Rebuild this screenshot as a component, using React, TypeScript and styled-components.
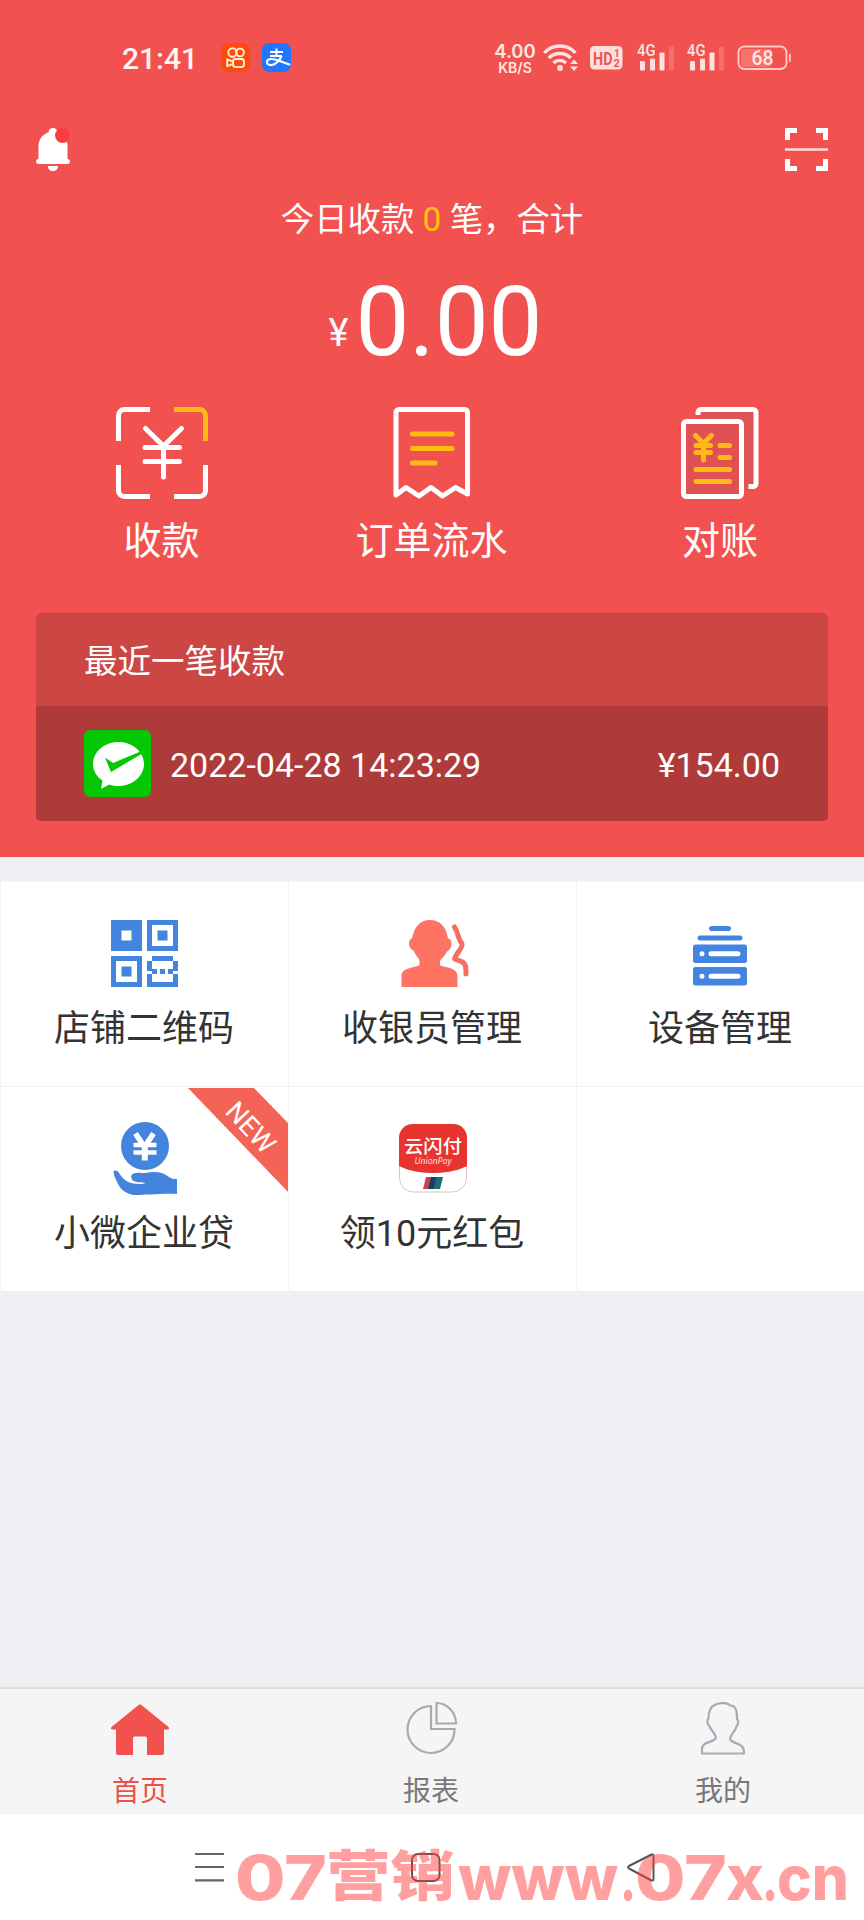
import React from "react";
import styled, { createGlobalStyle } from "styled-components";

const GlobalStyle = createGlobalStyle`
  * { box-sizing: border-box; }
  body { margin: 0; background: #efeff4; font-family: Roboto, "Noto Sans CJK SC", sans-serif; }
  svg { display: block; flex: none; overflow: visible; }
`;

const Screen = styled.div`
  width: 864px;
  height: 1920px;
  display: flex;
  flex-direction: column;
  background: #efeff4;
  overflow: hidden;
`;

/* ---------- Hero ---------- */
const Hero = styled.section`
  height: 857px;
  flex: none;
  background: #f2524f;
  color: #fff;
`;

const StatusBar = styled.div`
  height: 116px;
  display: flex;
  align-items: center;
  padding-left: 122px;
`;

const Clock = styled.span`
  font-size: 30px;
  font-weight: 500;
  width: 99px;
  color: #fff4f2;
`;

const AppBadge = styled.span<{ $color: string; $gap?: number }>`
  width: 29px;
  height: 29px;
  border-radius: 7px;
  margin: -1px ${(p) => p.$gap ?? 0}px 0 0;
  background: ${(p) => p.$color};
`;

const Speed = styled.div`
  width: 42px;
  display: flex;
  flex-direction: column;
  align-items: center;
  font-family: Inter, sans-serif;
  color: #ffe9e7;
  white-space: nowrap;
`;
const SpeedValue = styled.span`
  font-size: 18.5px;
  line-height: 18px;
  font-weight: 600;
`;
const SpeedUnit = styled.span`
  font-size: 14px;
  line-height: 15px;
  font-weight: 600;
`;

const StatusIcon = styled.svg<{ $gap: number }>`
  margin-left: ${(p) => p.$gap}px;
`;

const TopBar = styled.div`
  height: 55px;
  padding: 12px 36px 0 35px;
  display: flex;
  justify-content: space-between;
`;

const Summary = styled.div`
  margin-top: 25px;
  height: 48px;
  line-height: 48px;
  text-align: center;
  font-size: 33.4px;
  white-space: pre;
`;
const Count = styled.span`
  color: #ffc113;
`;

const Amount = styled.div`
  margin-top: 23px;
  height: 110px;
  padding-left: 7px;
  display: flex;
  justify-content: center;
  line-height: 110px;
`;
const Currency = styled.span`
  font-size: 38px;
  padding-top: 11px;
  margin-right: 7px;
`;
const Total = styled.span`
  font-size: 96px;
`;

const Actions = styled.nav`
  margin-top: 30px;
  display: flex;
`;
const Action = styled.div<{ $width: number; $gap: number }>`
  width: ${(p) => p.$width}px;
  margin-left: ${(p) => p.$gap}px;
  display: flex;
  flex-direction: column;
  align-items: center;
  font-size: 38px;
  line-height: 44px;
  gap: 20px;
  white-space: nowrap;
`;

const Latest = styled.div`
  margin: 50px 36px 0;
  border-radius: 5px;
  overflow: hidden;
  font-size: 33.5px;
`;
const LatestTitle = styled.div`
  height: 93px;
  padding: 2px 48px 0;
  line-height: 93px;
  background: #cc4744;
`;
const LatestRow = styled.div`
  height: 115px;
  padding: 0 48px;
  display: flex;
  align-items: center;
  background: #ae3a39;
  font-size: 34px;
`;
const PaidAt = styled.span`
  flex: 1;
  margin: 2px 0 0 19px;
`;
const PaidSum = styled.span`
  margin-top: 2px;
`;

/* ---------- Feature grid ---------- */
const Grid = styled.section`
  margin-top: 24px;
  display: grid;
  grid-template-columns: repeat(3, 288px);
  grid-auto-rows: 205px;
  background: #fff;
  flex: none;
`;
const Cell = styled.div`
  position: relative;
  display: flex;
  flex-direction: column;
  align-items: center;
  gap: 14px;
  padding-top: 36px;
  box-shadow: inset 1px 1px 0 #f3f3f5;
  color: #333;
  font-size: 36px;
  line-height: 52px;
  overflow: hidden;
`;
const IconSlot = styled.div<{ $shift?: number }>`
  height: 72px;
  margin-left: ${(p) => p.$shift ?? 0}px;
  display: flex;
  align-items: center;
`;
const Ribbon = styled.svg`
  position: absolute;
  top: 2px;
  right: -1px;
`;

/* ---------- Bottom bars ---------- */
const TabBar = styled.nav`
  margin-top: auto;
  height: 127px;
  flex: none;
  padding: 13px 0 0 0;
  display: flex;
  justify-content: space-between;
  border-top: 2px solid #dfdfe2;
  background: #f5f5f5;
`;
const Tab = styled.div<{ $active?: boolean }>`
  width: ${(p) => (p.$active ? 280 : 282)}px;
  display: flex;
  flex-direction: column;
  align-items: center;
  gap: 16px;
  font-size: 28px;
  line-height: 40px;
  color: ${(p) => (p.$active ? "#ee4f4b" : "#77777c")};
`;

const SystemNav = styled.div`
  position: relative;
  height: 106px;
  flex: none;
  display: flex;
  align-items: flex-start;
  padding: 38px 208px 0 194px;
  justify-content: space-between;
  background: #fff;
`;
const Watermark = styled.svg`
  position: absolute;
  left: 230px;
  top: 26px;
`;

/* ---------- Icons ---------- */
const Bell = () => (
  <svg width="36" height="44" viewBox="0 0 36 44">
    <path fill="#fff" d="M18 0c-2.600 0-4.300 1.800-4.500 4.200C7.500 6.300 3.500 11.600 3.500 18v13c-1.500 0-2.500 1-2.500 2.500S2 36 3.500 36h29c1.500 0 2.500-1 2.500-2.500S34 31 32.500 31V18c0-6.400-4-11.700-10-13.800C22.300 1.800 20.600 0 18 0zM13 38h10c0 3-2 5-5 5s-5-2-5-5z" />
    <circle cx="27.500" cy="7.500" r="7.500" fill="#fc3b3f" />
  </svg>
);

const Scan = () => (
  <svg width="43" height="43" viewBox="0 0 43 43" fill="none" stroke="#fff">
    <path strokeWidth="5" d="M2.500 12V2.500H12M31 2.500h9.500V12M40.500 31v9.500H31M12 40.500H2.500V31" />
    <path strokeWidth="2.600" stroke="#ffdedb" d="M0 21.500h43" />
  </svg>
);

const Kuaishou = () => (
  <svg width="29" height="29" viewBox="0 0 29 29" fill="none" stroke="#fff1d8" strokeWidth="1.900">
    <circle cx="11.500" cy="9.500" r="4.200" />
    <circle cx="19" cy="9.500" r="3.900" />
    <rect x="12" y="16" width="11" height="8" rx="2.500" />
    <path strokeLinejoin="round" d="M11.500 18.300 6.200 16.500v6.700l5.300-2" />
  </svg>
);

const Alipay = () => (
  <svg width="29" height="29" viewBox="0 0 29 29" fill="none" stroke="#fff">
    <path strokeWidth="2" d="M8 9h13M14.500 5.500v7.500M8 13h12" />
    <path strokeWidth="2.200" d="M19.500 13c-1.500 4-5.500 8.500-9.500 9-3.500.3-5-1-5-2.800 0-2.200 2.200-3.200 4.700-3.200 4.500 0 9 3 18.600 5.700" />
  </svg>
);

const Wifi = () => (
  <StatusIcon $gap={7} width="36" height="28" viewBox="0 0 36 28" fill="none" stroke="#ffe2df" strokeWidth="3.300">
    <path d="M1.200 8.800C10-.3 24-.3 32.500 8.800M5.800 14c6-6 16-6 22 0M10.500 19c3.500-3.400 9-3.400 12.500 0" />
    <circle cx="17" cy="24" r="2.900" fill="#ffe2df" stroke="none" />
    <path fill="#ffe2df" stroke="none" d="m31 15.500 4 4.500h-8zM31 27l4-4.500h-8z" />
  </StatusIcon>
);

const HdBadge = () => (
  <StatusIcon $gap={11} width="33" height="24" viewBox="0 0 33 24" fontFamily="Roboto, sans-serif" fontWeight="700" fill="#ec5653">
    <rect width="32.500" height="23.500" rx="4.500" fill="#ffdfdc" />
    <text x="3" y="18.500" fontSize="18" textLength="19.500" lengthAdjust="spacingAndGlyphs">HD</text>
    <text x="24" y="11" fontSize="10">1</text>
    <text x="23.500" y="20.500" fontSize="11">2</text>
  </StatusIcon>
);

const Signal = ({ gap }: { gap: number }) => (
  <StatusIcon $gap={gap} width="38" height="28" viewBox="0 0 38 28" fill="#ffe2df">
    <text x="0" y="11.800" fontFamily="Roboto, sans-serif" fontWeight="500" fontSize="16.500" textLength="18.500" lengthAdjust="spacingAndGlyphs">4G</text>
    <rect x="3" y="17" width="5" height="9.500" rx="1" />
    <rect x="13" y="14.500" width="5" height="12" rx="1" />
    <rect x="22.500" y="8.500" width="5" height="18" rx="1" />
    <rect x="32" y="2.500" width="5" height="24" rx="1" fill="#f76f6b" />
  </StatusIcon>
);

const Battery = () => (
  <StatusIcon $gap={12} width="54" height="26" viewBox="0 0 54 26">
    <rect x="1.500" y="1.500" width="48" height="22.500" rx="6" fill="none" stroke="#ffc9c5" strokeWidth="1.800" />
    <path d="M8 4h26v18H8a4 4 0 0 1-4-4V8a4 4 0 0 1 4-4z" fill="#f8726d" />
    <rect x="52" y="9" width="1.800" height="8" fill="#ffc9c5" />
    <text x="25.500" y="20" textAnchor="middle" fontFamily="Roboto, sans-serif" fontSize="19.500" fontWeight="500" fill="#ffe7e4">68</text>
  </StatusIcon>
);

const CollectIcon = () => (
  <svg width="92" height="92" viewBox="0 0 92 92" fill="none" stroke="#fff" strokeWidth="5">
    <path d="M34 2.500H8.500a6 6 0 0 0-6 6V34M2.500 58v25.500a6 6 0 0 0 6 6H34M58 89.500h25.500a6 6 0 0 0 6-6V58" />
    <path stroke="#ffbb14" d="M58 2.500h25.500a6 6 0 0 1 6 6V34" />
    <path strokeLinecap="round" d="m29.500 21.500 18 17.500 18-17.500M47.500 39v31M29 40.500h34.500M29 54.500h34.500" />
  </svg>
);

const OrdersIcon = () => (
  <svg width="78" height="92" viewBox="0 0 78 92" fill="none" strokeWidth="5">
    <path stroke="#fff" strokeLinejoin="round" d="M3 88V5.500a3 3 0 0 1 3-3h65.500a3 3 0 0 1 3 3V87L62.500 80.500 49.500 89 38 80.500 26 89 13 80.500z" />
    <path stroke="#ffbb14" strokeLinecap="round" d="M19.500 27H59M19.500 41.500H59M19.500 56H42" />
  </svg>
);

const ReconcileIcon = () => (
  <svg width="78" height="92" viewBox="0 0 78 92" fill="none" stroke="#fff" strokeWidth="5">
    <path fill="#e05354" stroke="none" d="M17 3h58v76H17z" />
    <path d="M17 8V5.500a3 3 0 0 1 3-3h52a3 3 0 0 1 3 3V76.500a3 3 0 0 1-3 3h-4.500" />
    <rect x="2.500" y="14.500" width="58" height="75" rx="3" fill="#df5153" />
    <path stroke="#ffbb14" strokeLinecap="round" d="m14.500 28.500 8 8 8-8M22.500 37v16M15 38.500h14.500M15 45.500h14.500M39 38.500h9.500M39 50.500h9.500M15 62.500h33.500M15 74.500h33.500" />
  </svg>
);

const WechatPay = () => (
  <svg width="67" height="67" viewBox="0 0 67 67">
    <rect width="67" height="67" rx="6" fill="#06c704" />
    <path fill="#fff" d="M34.500 12c14.100 0 25.500 9.800 25.500 22S48.600 56 34.500 56c-3.300 0-6.500-.5-9.300-1.500L17 59l1.500-8.500C12.500 46.500 9 40.600 9 34c0-12.200 11.400-22 25.500-22z" />
    <path fill="#06c704" d="m21 27.500 8 5.500L60 20v2.500L27 42z" />
  </svg>
);

const QrIcon = () => (
  <svg width="67" height="67" viewBox="0 0 67 67" fill="#4384df">
    <path fillRule="evenodd" d="M0 0h31v31H0zM10.500 10.500v10h10v-10z" />
    <path fillRule="evenodd" d="M36 0h31v31H36zM41 5v21h21V5z" />
    <path d="M46.500 10.500h10v10h-10z" />
    <path fillRule="evenodd" d="M0 36h31v31H0zM5 41v21h21V41z" />
    <path d="M10.500 46.500h10v10h-10z" />
    <path d="M41 36h21v5H41zM36 41h5v8h5v5h-5v-3h-5zM62 41h5v10h-5v3h-5v-5h5zM49 49h5v5h-5zM36 54h5v8h21v-8h5v13H36z" />
  </svg>
);

const CashierIcon = () => (
  <svg width="67" height="67" viewBox="0 0 67 67">
    <path fill="#ff7363" d="M29 0c10 0 16.500 7 18 18.500 2 0 3.500 2 3.500 5 0 4-2 7-5 8.500C44 36 41 38 39.500 40c-.8 2-.8 4 0 5.500 6 2.500 17 2 17 11V67H.500V56c0-8 11-8 17.500-10.500.8-1.500.8-4.500 0-6.500-1.500-2-4-4.500-5-8-3-1.500-5-4-5-7.500 0-3 1.500-5 3-5C13 7 19 0 29 0z" />
    <path fill="none" stroke="#f57062" strokeWidth="5" strokeLinecap="round" strokeLinejoin="round" d="M53.500 7c4 6.500 3.500 11 6 14.500 3 3 1 6-1.500 9.500-2 3-4 6-4.500 8 5 2 10 2.500 11 7 .5 3 .5 5 .5 8" />
  </svg>
);

const DeviceIcon = () => (
  <svg width="54" height="67" viewBox="0 0 54 67" fill="#4384df">
    <rect x="16" y="6" width="22" height="5" rx="2.500" />
    <rect x="4.500" y="15.500" width="45" height="5" rx="2.500" />
    <rect y="24.500" width="54" height="18.500" rx="2.500" />
    <rect y="47" width="54" height="18.500" rx="2.500" />
    <path stroke="#fff" strokeWidth="5" strokeLinecap="round" d="M18 33.700h27M18 56.200h27M9 33.700h0M9 56.200h0" />
  </svg>
);

const LoanIcon = () => (
  <svg width="64" height="73" viewBox="0 0 64 73" fill="#4384df">
    <circle cx="32" cy="24" r="24" />
    <path fill="none" stroke="#fff" strokeWidth="5.500" d="m22.500 11.500 9 13.500 9-13.500" />
    <path fill="none" stroke="#fff" strokeWidth="4.500" d="M20.500 23h23M20.500 30.500h23" />
    <path fill="none" stroke="#fff" strokeWidth="6" d="M31.800 22v16.500" />
    <path d="M.500 49c1.500-1 4-.5 5.500 2 3.500 5.500 8 9.500 14.500 10.500 5 .8 10 .5 12-.5-3-1-8 0-12-2-3-2-3-6.500 0-7.500 4-1.500 8-.5 12-.5 9-2 17-1 22 3 3 2.300 6 3.500 9.500 3V72c-15-1-32 1.200-43.500 1C12 71 8 68 5 62 3 58 .500 53 .500 49z" />
  </svg>
);

const UnionPayIcon = () => (
  <svg width="68" height="69" viewBox="0 0 68 69">
    <rect x=".5" y=".5" width="67" height="67.500" rx="14" fill="#fff" stroke="#d9b3b3" strokeWidth=".8" />
    <path fill="#e73430" d="M0 42V14C0 6 6 0 14 0h40c8 0 14 6 14 14v28c-12 6-24 7-34 7S12 48 0 42z" />
    <text x="34" y="28.500" textAnchor="middle" fill="#fff" fontFamily="Noto Sans CJK SC, sans-serif" fontWeight="500" fontSize="18.500" textLength="58" lengthAdjust="spacingAndGlyphs">云闪付</text>
    <text x="34" y="40" textAnchor="middle" fill="#ffe3e0" fontFamily="Open Sans, sans-serif" fontStyle="italic" fontSize="8.500" textLength="37" lengthAdjust="spacingAndGlyphs">UnionPay</text>
    <path fill="#c8434c" d="M27 53h7l-3 12h-7z" />
    <path fill="#1c3a6e" d="M32 53h7l-3 12h-7z" />
    <path fill="#1d6e68" d="M37.500 53H44l-3 12h-6.500z" />
  </svg>
);

const NewRibbon = () => (
  <Ribbon width="101" height="105" viewBox="0 0 101 105">
    <path fill="#f46456" d="M0 0h66l35 36v69z" />
    <text transform="translate(61 41) rotate(47)" x="0" y="7" textAnchor="middle" fill="#fff" fontFamily="Roboto, sans-serif" fontSize="27">NEW</text>
  </Ribbon>
);

const HomeIcon = () => (
  <svg width="60" height="54" viewBox="0 0 60 54" fill="#f1524e">
    <path d="M28 3.500c1.200-1.200 2.800-1.200 4 0L58.500 25c1 1 .5 2.500-1 2.500H54V51c0 1.200-.8 2-2 2H37V36.500c0-1.200-.8-2-2-2H25c-1.200 0-2 .8-2 2V53H8c-1.200 0-2-.8-2-2V27.500H2.500c-1.500 0-2-1.500-1-2.500z" />
  </svg>
);

const ReportIcon = () => (
  <svg width="52" height="54" viewBox="0 0 52 54" fill="none" stroke="#a7abb5" strokeWidth="2.200">
    <path d="M26 4A23.500 23.500 0 1 0 49.500 27H26z" />
    <path d="M31.500 1v20.500H51C51 10 42 1 31.500 1z" />
  </svg>
);

const MineIcon = () => (
  <svg width="46" height="54" viewBox="0 0 46 54" fill="none" stroke="#a7abb5" strokeWidth="2.200" strokeLinejoin="round">
    <path d="M15.500 2.500c5-2.500 13-1.500 14.500 1 6 0 7 5 7 13.500 2 1.500 1.500 5-.5 7.500-1 4.500-6 8-6.500 12.500 2 5.500 14 3 14 13V51.500H2V47c0-8 12-6 14-11.500-.5-4.500-5.500-7-6.500-11.500-2.500-2-3-5.500-1-7.500 0-7 2-12 7-14z" />
  </svg>
);

const actions = [
  { label: "收款", icon: <CollectIcon />, width: 92, gap: 115.5 },
  { label: "订单流水", icon: <OrdersIcon />, width: 152, gap: 148 },
  { label: "对账", icon: <ReconcileIcon />, width: 78, gap: 173.5 },
];

const features = [
  { label: "店铺二维码", icon: <QrIcon />, shift: 1 },
  { label: "收银员管理", icon: <CashierIcon />, shift: 4 },
  { label: "设备管理", icon: <DeviceIcon /> },
  { label: "小微企业贷", icon: <LoanIcon />, shift: 2, isNew: true },
  { label: "领10元红包", icon: <UnionPayIcon />, shift: 1 },
];

export default function App() {
  return (
    <Screen>
      <GlobalStyle />
      <Hero>
        <StatusBar>
          <Clock>21:41</Clock>
          <AppBadge $color="#ff4a0d" $gap={12}><Kuaishou /></AppBadge>
          <AppBadge $color="#1f77ff" $gap={203}><Alipay /></AppBadge>
          <Speed>
            <SpeedValue>4.00</SpeedValue>
            <SpeedUnit>KB/S</SpeedUnit>
          </Speed>
          <Wifi />
          <HdBadge />
          <Signal gap={14} />
          <Signal gap={12} />
          <Battery />
        </StatusBar>
        <TopBar>
          <Bell />
          <Scan />
        </TopBar>
        <Summary>今日收款 <Count>0</Count> 笔，合计</Summary>
        <Amount>
          <Currency>¥</Currency>
          <Total>0.00</Total>
        </Amount>
        <Actions>
          {actions.map((a) => (
            <Action key={a.label} $width={a.width} $gap={a.gap}>
              {a.icon}
              <span>{a.label}</span>
            </Action>
          ))}
        </Actions>
        <Latest>
          <LatestTitle>最近一笔收款</LatestTitle>
          <LatestRow>
            <WechatPay />
            <PaidAt>2022-04-28 14:23:29</PaidAt>
            <PaidSum>¥154.00</PaidSum>
          </LatestRow>
        </Latest>
      </Hero>

      <Grid>
        {features.map((f) => (
          <Cell key={f.label}>
            <IconSlot $shift={f.shift}>{f.icon}</IconSlot>
            <span>{f.label}</span>
            {f.isNew && <NewRibbon />}
          </Cell>
        ))}
        <Cell />
      </Grid>

      <TabBar>
        <Tab $active><HomeIcon />首页</Tab>
        <Tab><ReportIcon />报表</Tab>
        <Tab><MineIcon />我的</Tab>
      </TabBar>

      <SystemNav>
        <svg width="31" height="31" viewBox="0 0 31 31" stroke="#666" strokeWidth="2.200">
          <path d="M1 2h29M1 15h29M1 28.300h29" />
        </svg>
        <svg width="30" height="31" viewBox="0 0 30 31" fill="none" stroke="#555" strokeWidth="2">
          <rect x="1" y="2" width="27.500" height="27" rx="6" />
        </svg>
        <svg width="30" height="31" viewBox="0 0 30 31" fill="none" stroke="#555" strokeWidth="2" strokeLinejoin="round">
          <path d="M25.500 2.500 3 14q-2 1.200 0 2.500l22.500 12q2 .5 2-1.500V4q0-2-2-1.500z" />
        </svg>
        <Watermark width="625" height="66" viewBox="0 0 625 66" fill="#ff4040" fillOpacity="0.500" fontFamily="Inter, sans-serif" fontWeight="800" fontSize="62">
          <text x="5" y="60" textLength="92" lengthAdjust="spacingAndGlyphs">07</text>
          <text x="96" y="55.500" fontFamily="Noto Sans CJK SC, sans-serif" fontWeight="900" fontSize="54" textLength="129" lengthAdjust="spacingAndGlyphs">营销</text>
          <text x="228" y="60" textLength="160" lengthAdjust="spacingAndGlyphs">www</text>
          <text x="390" y="60" textLength="16" lengthAdjust="spacingAndGlyphs">.</text>
          <text x="405" y="60" textLength="92" lengthAdjust="spacingAndGlyphs">07</text>
          <text x="496" y="60" textLength="38" lengthAdjust="spacingAndGlyphs">x</text>
          <text x="532" y="60" textLength="16" lengthAdjust="spacingAndGlyphs">.</text>
          <text x="547" y="60" textLength="72" lengthAdjust="spacingAndGlyphs">cn</text>
        </Watermark>
      </SystemNav>
    </Screen>
  );
}
